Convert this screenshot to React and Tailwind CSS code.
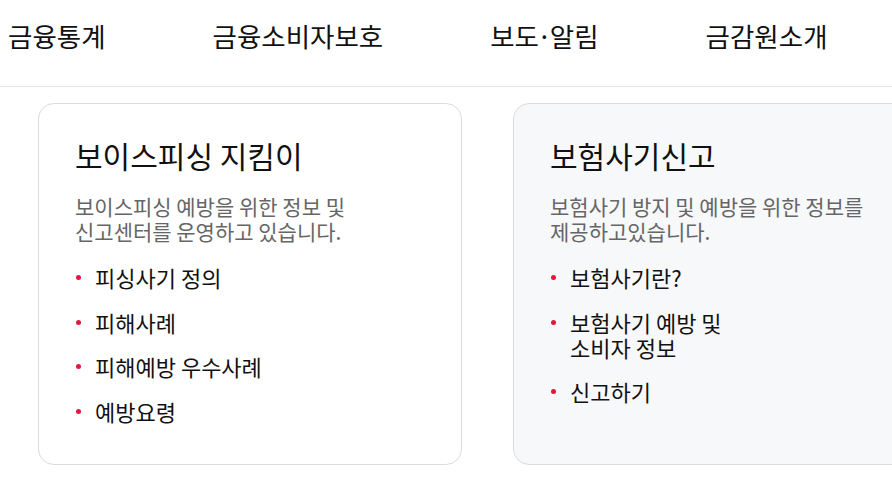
import React from 'react';

const navItems = ['금융통계', '금융소비자보호', '보도·알림', '금감원소개'];

const cards = [
  {
    title: '보이스피싱 지킴이',
    desc: ['보이스피싱 예방을 위한 정보 및', '신고센터를 운영하고 있습니다.'],
    links: [['피싱사기 정의'], ['피해사례'], ['피해예방 우수사례'], ['예방요령']],
    tone: 'bg-white',
  },
  {
    title: '보험사기신고',
    desc: ['보험사기 방지 및 예방을 위한 정보를', '제공하고있습니다.'],
    links: [['보험사기란?'], ['보험사기 예방 및', '소비자 정보'], ['신고하기']],
    tone: 'bg-[#f7f8fa]',
  },
];

const Card = ({ card }) => (
  <div className={`w-[424px] shrink-0 rounded-[16px] border border-[#dcdcdc] px-9 pt-8 pb-10 ${card.tone}`}>
    <h2 className="text-[30px] leading-[38px] text-[#111]">{card.title}</h2>

    {/* Description */}
    <p className="mt-[20px] text-[21px] leading-[25px] text-[#666]">
      {card.desc[0]}
      <br />
      {card.desc[1]}
    </p>

    {/* Links */}
    <ul className="mt-[21px] flex flex-col gap-[19.5px]">
      {card.links.map((lines, i) => (
        <li key={i} className="flex items-start text-[22px] leading-[25px] text-[#111]">
          <span className="mt-[10px] ml-[1px] mr-[14px] h-[5px] w-[5px] shrink-0 rounded-full bg-[#e2173b]" />
          <span>
            {lines.map((l, j) => (
              <React.Fragment key={j}>
                {j > 0 && <br />}
                {l}
              </React.Fragment>
            ))}
          </span>
        </li>
      ))}
    </ul>
  </div>
);

export default function App() {
  return (
    <div
      className="h-[478px] w-[892px] overflow-hidden bg-white"
      style={{ fontFamily: '"Noto Sans CJK KR", "Noto Sans", sans-serif' }}
    >
      {/* Top navigation */}
      <nav className="h-[87px] border-b border-[#e6e6e6] pl-[8px] pt-[18px]">
        <ul className="flex gap-[107px] text-[26.5px] leading-[36px] text-[#111]">
          {navItems.map((item) => (
            <li key={item} className="whitespace-nowrap">
              {item === '보도·알림' ? (
                <>
                  보도<span className="mx-[-2px]">·</span>알림
                </>
              ) : (
                item
              )}
            </li>
          ))}
        </ul>
      </nav>

      {/* Service cards */}
      <div className="flex gap-[51px] pl-[38px] pt-[16px]">
        {cards.map((card) => (
          <Card key={card.title} card={card} />
        ))}
      </div>
    </div>
  );
}
